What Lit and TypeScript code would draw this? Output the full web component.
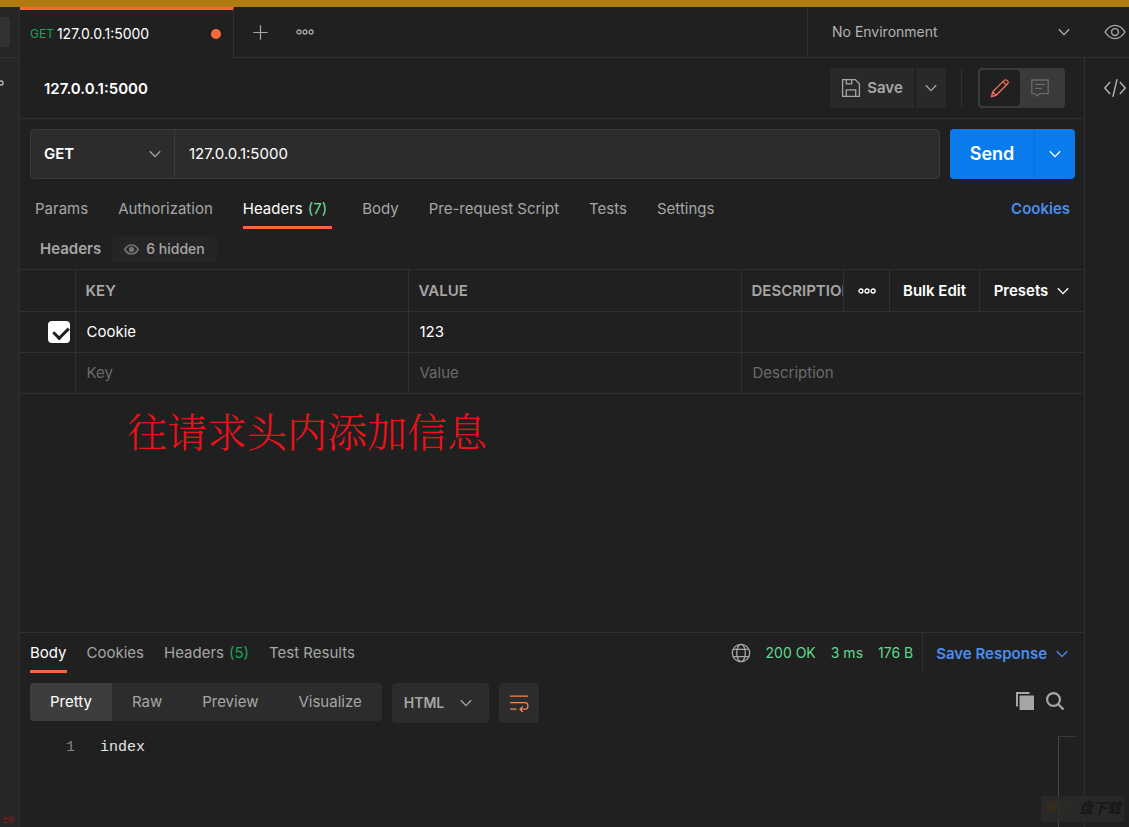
import { LitElement, html, css, svg, nothing } from "lit";
import { customElement, property, state } from "lit/decorators.js";
import { classMap } from "lit/directives/class-map.js";

const chevron = html`<svg class="chev" width="14" height="14" viewBox="0 0 14 14" fill="none" stroke="currentColor" stroke-width="1.3" aria-hidden="true"><path d="M1.8 4.2 7 9.6l5.2-5.4" /></svg>`;

const dots = html`<svg width="18" height="8" viewBox="0 0 18 8" fill="none" stroke="currentColor" stroke-width="1.3" aria-hidden="true"><circle cx="2.9" cy="4" r="2" /><circle cx="9" cy="4" r="2" /><circle cx="15.1" cy="4" r="2" /></svg>`;

const icon = (size: number, body: unknown) => html`<svg width=${size} height=${size} viewBox="0 0 20 20" fill="none" stroke="currentColor" stroke-width="1.3" aria-hidden="true">${body}</svg>`;

const icons = {
  plus: svg`<path d="M10 2.4v15.2M2.4 10h15.2" />`,
  eye: svg`<path d="M1 10C3.400 6 6.400 4 10 4s6.600 2 9 6c-2.400 4-5.400 6-9 6s-6.600-2-9-6Z" /><circle cx="10" cy="10" r="3.100" />`,
  smallEye: svg`<path d="M1 10c2.400-4 5.400-6 9-6s6.600 2 9 6c-2.400 4-5.400 6-9 6s-6.600-2-9-6Z" stroke-width="2.200" /><circle cx="10" cy="10" r="3" fill="currentColor" />`,
  save: svg`<path d="M1.600 1.600h12.600l4.200 4.200v12.600H1.600ZM5.300 18.400v-6.600h9.400v6.600M5.300 1.600v4.200h5.400V1.600" />`,
  pencil: svg`<path d="m1.500 18.500 1.200-4.600L14.200 2.400a2 2 0 0 1 2.900 0l.5.5a2 2 0 0 1 0 2.900L6.100 17.300ZM13 3.600 16.400 7M2.700 13.900l3.400 3.400" />`,
  comment: svg`<path d="M1.800 2h16.400v13.600H9.600L7.200 18l-2.300-2.400H1.800ZM5 6.300h10M5 10.300h7" />`,
  code: svg`<path d="M5.600 4.600.7 10l4.900 5.400M14.400 4.600l4.900 5.400-4.900 5.400M11.900 2 8.100 18" />`,
  globe: svg`<circle cx="10" cy="10" r="8.700" /><ellipse cx="10" cy="10" rx="4.300" ry="8.700" /><path d="M2.400 6.300h15.200M2.400 13.700h15.200" />`,
  wrap: svg`<path d="M1 3.200h18M1 9.600h14.600a3.300 3.300 0 0 1 0 6.600h-4M1 16.200h6.500M13.800 13.400l-2.700 2.800 2.700 2.800" />`,
  copy: svg`<path d="M2 15.500V2h12.500" stroke-width="2" /><path d="M4.500 4.500H19V19H4.500Z" fill="currentColor" stroke="none" />`,
  search: svg`<circle cx="8.500" cy="8.500" r="6.400" stroke-width="2.200" /><path d="m13 13 5.500 5.500" stroke-width="2.400" />`,
};

interface TabItem {
  label: string;
  count?: number;
}

@customElement("tab-strip")
class TabStrip extends LitElement {
  @property({ attribute: false }) items: TabItem[] = [];
  @property({ type: Number }) active = 0;

  static styles = css`
    :host { display: flex; gap: 30px; }
    :host([dense]) { gap: 20px; }
    button {
      display: flex; align-items: center; gap: 5px; padding: 12px 0 0; border: 0;
      border-bottom: 3px solid transparent; background: none; color: #a6a6a6;
      font: 400 15px/20px Inter, sans-serif; white-space: nowrap; cursor: pointer;
    }
    :host([dense]) button { padding-top: 3px; }
    .active { color: #fff; border-bottom-color: #f2693c; }
    .wide { padding-right: 5px; }
    .count { color: #6bdd9a; }
    :host([dense]) .count { color: #1fa354; }
  `;

  render() {
    return this.items.map((item, i) => html`<button
        class=${classMap({ active: i === this.active, wide: i === this.active && item.count !== undefined })}
        @click=${() => (this.active = i)}>${item.label}${item.count === undefined ? nothing : html`<span class="count">(${item.count})</span>`}</button>`);
  }
}

@customElement("app-root")
class AppRoot extends LitElement {
  @state() private view = 0;

  private requestTabs: TabItem[] = [
    { label: "Params" }, { label: "Authorization" }, { label: "Headers", count: 7 }, { label: "Body" },
    { label: "Pre-request Script" }, { label: "Tests" }, { label: "Settings" },
  ];
  private responseTabs: TabItem[] = [
    { label: "Body" }, { label: "Cookies" }, { label: "Headers", count: 5 }, { label: "Test Results" },
  ];
  private views = ["Pretty", "Raw", "Preview", "Visualize"];
  private rows = [
    { key: "Cookie", value: "123", on: true },
    { key: "", value: "", on: false },
  ];

  static styles = css`
    * { box-sizing: border-box; }
    :host {
      --line: #303030; --muted: #a6a6a6; --field: #2c2c2c;
      display: flex; flex-direction: column; min-height: 100vh; position: relative;
      background: #202020; color: #fff; font: 400 15px/20px Inter, sans-serif;
    }
    button, input, select { font: inherit; color: inherit; margin: 0; }
    button { display: flex; align-items: center; justify-content: center; padding: 0; border: 0; background: none; cursor: pointer; }
    select { appearance: none; border: 0; background: none; width: 100%; padding: 0; outline: 0; }
    input { outline: 0; }
    svg { flex: none; display: block; }
    a { color: #4a8ef0; text-decoration: none; font-weight: 600; }

    .accent { height: 7px; background: #b07b10; }
    .shell { flex: 1; display: flex; }
    .side { width: 20px; background: #262626; border-right: 1px solid var(--line); display: flex; flex-direction: column; overflow: hidden; }
    .side-top { height: 51px; border-bottom: 1px solid var(--line); padding-top: 10px; }
    .side-chip { width: 10px; height: 30px; background: #323232; border-radius: 0 3px 3px 0; }
    .side-dot { color: #bbb; margin: 21px 0 0 -14px; }
    .side-note { margin-top: auto; padding-left: 2px; color: #861c1c; font: 10px/12px "Liberation Mono", monospace; }
    .work { flex: 1; min-width: 0; display: flex; flex-direction: column; }

    .topbar { display: flex; height: 51px; }
    .tab { width: 214px; border-top: 3px solid #f2693c; border-right: 1px solid var(--line); display: flex; align-items: center; padding: 0 12px 0 10px; gap: 3px; }
    .tab-verb { color: #1fa354; font-size: 12px; }
    .tab-name { font-size: 14px; flex: 1; text-align: left; }
    .unsaved { width: 10px; height: 10px; border-radius: 50%; background: #f76b38; }
    .tab-tools { flex: 1; display: flex; align-items: center; gap: 26px; padding-left: 17px; border-bottom: 1px solid var(--line); color: var(--muted); }
    .env { width: 322px; display: flex; align-items: center; padding-left: 24px; gap: 33px; border-left: 1px solid var(--line); border-bottom: 1px solid var(--line); color: var(--muted); }
    .env-pick { flex: 1; display: flex; align-items: center; color: #b3b3b3; font-size: 14px; }
    .eye { padding-right: 3px; }

    .body { flex: 1; display: flex; }
    .main { flex: 1; min-width: 0; display: flex; flex-direction: column; border-right: 1px solid var(--line); }
    .rail { width: 44px; padding-top: 19px; display: flex; flex-direction: column; align-items: flex-end; padding-right: 3px; color: #b3b3b3; }

    .title { height: 61px; display: flex; align-items: center; padding: 0 19px 0 24px; border-bottom: 1px solid var(--line); }
    h1 { margin: 0; flex: 1; font: 600 15px/20px Inter, sans-serif; padding-top: 2px; }
    .save { height: 40px; display: flex; gap: 2px; color: var(--muted); font-weight: 600; }
    .save button { background: #292929; }
    .save-main { width: 84px; gap: 6px; border-radius: 4px 0 0 4px; }
    .save-more { width: 30px; border-radius: 0 4px 4px 0; }
    .rule { width: 1px; height: 40px; background: var(--line); margin: 0 16px 0 15px; }
    .mode { display: flex; width: 87px; height: 40px; padding: 2px; border-radius: 4px; background: #3a3a3a; color: #6b6b6b; }
    .mode button { width: 40px; border-radius: 3px; }
    .mode .on { background: #202020; color: #f07055; }

    .request { display: flex; gap: 10px; padding: 10px 9px 0 10px; }
    .url { flex: 1; height: 50px; display: flex; background: var(--field); border: 1px solid #3b3b3b; border-radius: 4px; }
    .verb { width: 144px; display: flex; align-items: center; padding: 0 12px 0 13px; border-right: 1px solid #3b3b3b; font-weight: 600; color: #fff; }
    .verb .chev { color: var(--muted); }
    .url input { flex: 1; min-width: 0; border: 0; background: none; padding: 0 14px; }
    .send { display: flex; height: 50px; border-radius: 4px; overflow: hidden; background: #097bed; }
    .send-main { width: 84px; font-size: 18px; font-weight: 600; }
    .send-more { width: 41px; border-left: 1px solid #0a70d8; }

    .req-tabs { display: flex; justify-content: space-between; height: 50px; padding: 0 14px 0 15px; }
    .req-tabs a { line-height: 60px; }
    .sub { display: flex; align-items: center; gap: 11px; height: 40px; padding: 0 20px; color: var(--muted); font-weight: 500; }
    .sub-name { font-weight: 600; }
    .hidden { height: 26px; gap: 7px; padding: 0 12px; background: #252525; border-radius: 4px; font-size: 14px; }
    .hidden svg { color: #757575; }

    table { width: 100%; table-layout: fixed; border-collapse: collapse; border-top: 1px solid var(--line); }
    th, td { height: 41px; padding: 0; border-bottom: 1px solid var(--line); border-right: 1px solid var(--line); text-align: left; }
    th:last-child, td:last-child { border-right: 0; }
    .c-check { width: 55px; }
    .c-field { width: 333px; }
    th { color: var(--muted); font-weight: 600; }
    .th-text { padding-left: 10px; }
    .last { display: flex; height: 41px; }
    .last > * { border-right: 1px solid var(--line); }
    .last > :last-child { border-right: 0; }
    .desc { flex: 1; min-width: 0; overflow: hidden; padding-left: 10px; line-height: 42px; }
    .last button { color: #fff; font-weight: 600; }
    .more { width: 46px; }
    .bulk { width: 90px; }
    .presets { width: 104px; gap: 8px; }
    td { vertical-align: top; }
    td.pick { vertical-align: middle; }
    td input[type="text"] { display: block; width: 100%; border: 0; background: none; padding: 0 11px; height: 38px; }
    td input::placeholder { color: #6b6b6b; opacity: 1; }
    .tick { appearance: none; display: block; width: 22px; height: 22px; margin-left: 28px; border-radius: 4px; background: #fff; position: relative; }
    .tick::after { content: ""; position: absolute; left: 8px; top: 3px; width: 7px; height: 12px; border: solid #202020; border-width: 0 3px 3px 0; transform: rotate(45deg); }

    .note { flex: 1; margin: 0; padding: 8px 0 0 107px; color: #f0101a; font: 300 40px/56px "Noto Serif CJK SC", "Noto Sans CJK SC", serif; }

    .response { border-top: 1px solid var(--line); }
    .res-head { display: flex; align-items: stretch; height: 40px; padding: 0 15px 0 10px; }
    .status { margin-left: auto; display: flex; align-items: center; gap: 15px; color: #5fd98f; font-size: 14px; }
    .status svg { color: var(--muted); }
    .save-res { margin-left: 9px; padding-left: 13px; padding-top: 2px; gap: 8px; border-left: 1px solid var(--line); color: #4a8ef0; font-weight: 600; }
    .tools { display: flex; align-items: flex-start; gap: 10px; height: 60px; padding: 10px 19px 0 10px; }
    .views { display: flex; height: 38px; border-radius: 4px; overflow: hidden; background: var(--field); color: var(--muted); }
    .views button { padding: 0 20px; }
    .views .on { background: #3d3d3d; color: #fff; }
    .lang { width: 97px; height: 40px; display: flex; align-items: center; padding: 0 16px 0 12px; background: var(--field); border-radius: 4px; color: var(--muted); font-weight: 600; font-size: 14px; }
    .wrap { width: 40px; height: 40px; background: var(--field); border-radius: 4px; color: #f0865a; }
    .icons { margin-left: auto; height: 36px; display: flex; align-items: center; gap: 10px; color: var(--muted); }
    .output { display: flex; height: 94px; padding-top: 3px; }
    .code { flex: 1; display: flex; gap: 25px; margin: 0; padding-left: 46px; font: 15px/24px "Liberation Mono", monospace; color: #e6e6e6; }
    code { font: inherit; }
    .ln { color: #858585; }
    .map { width: 17px; margin-right: 9px; border-top: 1px solid #3a3a3a; border-left: 1px solid #484848; }

    .mark { position: absolute; right: 5px; bottom: 5px; width: 83px; height: 26px; display: flex; align-items: center; gap: 4px; padding: 0 0 4px 3px; background: #2a2a2acc; color: #171717; font: italic 700 14px/20px "Noto Sans CJK SC", sans-serif; }
  `;

  render() {
    return html`
      <div class="accent"></div>
      <div class="shell">
        <aside class="side">
          <div class="side-top"><div class="side-chip"></div></div>
          <div class="side-dot">${dots}</div>
          <div class="side-note">±0</div>
        </aside>
        <div class="work">
          <header class="topbar">
            <button class="tab"><span class="tab-verb">GET</span><span class="tab-name">127.0.0.1:5000</span><span class="unsaved"></span></button>
            <div class="tab-tools">
              <button aria-label="New tab">${icon(19, icons.plus)}</button>
              <button aria-label="Tab options">${dots}</button>
            </div>
            <div class="env">
              <label class="env-pick"><select aria-label="Environment"><option>No Environment</option></select>${chevron}</label>
              <button class="eye" aria-label="Environment quick look">${icon(22, icons.eye)}</button>
            </div>
          </header>
          <div class="body">
            <main class="main">
              <div class="title">
                <h1>127.0.0.1:5000</h1>
                <div class="save">
                  <button class="save-main">${icon(20, icons.save)}Save</button>
                  <button class="save-more" aria-label="Save options">${chevron}</button>
                </div>
                <div class="rule"></div>
                <div class="mode">
                  <button class="on" aria-label="Edit">${icon(20, icons.pencil)}</button>
                  <button aria-label="Comments">${icon(20, icons.comment)}</button>
                </div>
              </div>
              <div class="request">
                <div class="url">
                  <label class="verb"><select aria-label="Method"><option>GET</option></select>${chevron}</label>
                  <input type="text" aria-label="Request URL" .value=${"127.0.0.1:5000"} />
                </div>
                <div class="send">
                  <button class="send-main">Send</button>
                  <button class="send-more" aria-label="Send options">${chevron}</button>
                </div>
              </div>
              <div class="req-tabs">
                <tab-strip .items=${this.requestTabs} .active=${2}></tab-strip>
                <a href="#cookies">Cookies</a>
              </div>
              <div class="sub"><span class="sub-name">Headers</span><button class="hidden">${icon(15, icons.smallEye)}6 hidden</button></div>
              <table>
                <thead>
                  <tr>
                    <th class="c-check"></th>
                    <th class="c-field"><div class="th-text">KEY</div></th>
                    <th class="c-field"><div class="th-text">VALUE</div></th>
                    <th>
                      <div class="last">
                        <div class="desc">DESCRIPTION</div>
                        <button class="more" aria-label="Column options">${dots}</button>
                        <button class="bulk">Bulk Edit</button>
                        <button class="presets">Presets ${chevron}</button>
                      </div>
                    </th>
                  </tr>
                </thead>
                <tbody>
                  ${this.rows.map((r) => html`<tr>
                    <td class="pick">${r.on ? html`<input class="tick" type="checkbox" checked aria-label="Include header" />` : nothing}</td>
                    <td><input type="text" aria-label="Key" placeholder=${r.on ? "" : "Key"} .value=${r.key} /></td>
                    <td><input type="text" aria-label="Value" placeholder=${r.on ? "" : "Value"} .value=${r.value} /></td>
                    <td><input type="text" aria-label="Description" placeholder=${r.on ? "" : "Description"} /></td>
                  </tr>`)}
                </tbody>
              </table>
              <p class="note">往请求头内添加信息</p>
              <section class="response">
                <div class="res-head">
                  <tab-strip dense .items=${this.responseTabs} .active=${0}></tab-strip>
                  <div class="status">
                    ${icon(20, icons.globe)}<span>200 OK</span><span>3 ms</span><span>176 B</span>
                  </div>
                  <button class="save-res">Save Response ${chevron}</button>
                </div>
                <div class="tools">
                  <div class="views">
                    ${this.views.map((v, i) => html`<button class=${classMap({ on: i === this.view })} @click=${() => (this.view = i)}>${v}</button>`)}
                  </div>
                  <label class="lang"><select aria-label="Language"><option>HTML</option></select>${chevron}</label>
                  <button class="wrap" aria-label="Wrap lines">${icon(20, icons.wrap)}</button>
                  <div class="icons">
                    <button aria-label="Copy">${icon(20, icons.copy)}</button>
                    <button aria-label="Search">${icon(20, icons.search)}</button>
                  </div>
                </div>
                <div class="output">
                  <pre class="code"><span class="ln">1</span><code>index</code></pre>
                  <div class="map"></div>
                </div>
              </section>
            </main>
            <aside class="rail"><button aria-label="Code">${icon(22, icons.code)}</button></aside>
          </div>
        </div>
      </div>
      <div class="mark">
        <svg width="31" height="18" viewBox="0 0 31 18" aria-hidden="true"><circle cx="7" cy="9" r="6" fill="#332b1e" /><path d="M17 15V6M21 15V4h6v11" fill="none" stroke="#262e20" stroke-width="2" /></svg>
        <span>盘下载</span>
      </div>
    `;
  }
}
